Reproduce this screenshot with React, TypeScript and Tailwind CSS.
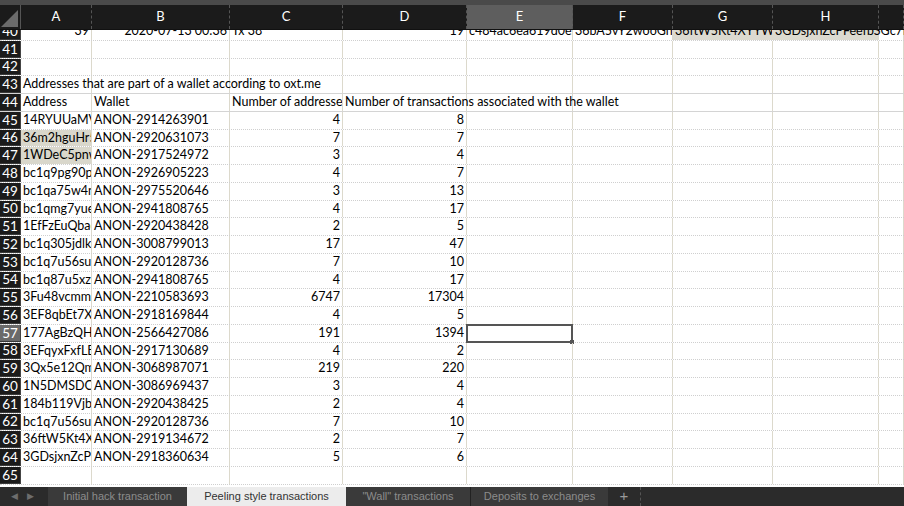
const cols = [
  { key: "A", w: "w-[71px]" },
  { key: "B", w: "w-[138px]" },
  { key: "C", w: "w-[113px]" },
  { key: "D", w: "w-[124px]" },
  { key: "E", w: "w-[106px]" },
  { key: "F", w: "w-[100px]" },
  { key: "G", w: "w-[100px]" },
  { key: "H", w: "w-[106px]" },
  { key: "I", w: "flex-1" },
];

type Row = { n: number; a?: string; b?: string; c?: string; d?: string; beigeA?: boolean };

const rows: Row[] = [
  { n: 45, a: "14RYUUaMVpX4", b: "ANON-2914263901", c: "4", d: "8" },
  { n: 46, a: "36m2hguHr5eK", b: "ANON-2920631073", c: "7", d: "7", beigeA: true },
  { n: 47, a: "1WDeC5pnwQ2", b: "ANON-2917524972", c: "3", d: "4", beigeA: true },
  { n: 48, a: "bc1q9pg90pvx", b: "ANON-2926905223", c: "4", d: "7" },
  { n: 49, a: "bc1qa75w4nxz", b: "ANON-2975520646", c: "3", d: "13" },
  { n: 50, a: "bc1qmg7yuezs", b: "ANON-2941808765", c: "4", d: "17" },
  { n: 51, a: "1EfFzEuQbaeJ", b: "ANON-2920438428", c: "2", d: "5" },
  { n: 52, a: "bc1q305jdlk3x", b: "ANON-3008799013", c: "17", d: "47" },
  { n: 53, a: "bc1q7u56suyk", b: "ANON-2920128736", c: "7", d: "10" },
  { n: 54, a: "bc1q87u5xzuq", b: "ANON-2941808765", c: "4", d: "17" },
  { n: 55, a: "3Fu48vcmmZq", b: "ANON-2210583693", c: "6747", d: "17304" },
  { n: 56, a: "3EF8qbEt7XTk", b: "ANON-2918169844", c: "4", d: "5" },
  { n: 57, a: "177AgBzQH5x", b: "ANON-2566427086", c: "191", d: "1394" },
  { n: 58, a: "3EFqyxFxfLE(", b: "ANON-2917130689", c: "4", d: "2" },
  { n: 59, a: "3Qx5e12QmVb", b: "ANON-3068987071", c: "219", d: "220" },
  { n: 60, a: "1N5DMSDCaT", b: "ANON-3086969437", c: "3", d: "4" },
  { n: 61, a: "184b119Vjbjz", b: "ANON-2920438425", c: "2", d: "4" },
  { n: 62, a: "bc1q7u56suyk", b: "ANON-2920128736", c: "7", d: "10" },
  { n: 63, a: "36ftW5Kt4XYY", b: "ANON-2919134672", c: "2", d: "7" },
  { n: 64, a: "3GDsjxnZcPFe", b: "ANON-2918360634", c: "5", d: "6" },
  { n: 65 },
];

const cellBase =
  "h-full shrink-0 border-r border-r-[#dcd9cc] px-[2px] flex items-center whitespace-nowrap";

function RowHead({ n, active }: { n: number | string; active?: boolean }) {
  return (
    <div
      className={`w-[21px] shrink-0 h-full flex items-center justify-center text-[13.5px] text-white border-b border-b-[#3a3a3a] border-r border-r-[#444] ${
        active ? "bg-[#6a6a6a]" : "bg-[#1b1b1b]"
      }`}
    >
      {n}
    </div>
  );
}

function Cell({
  w,
  children,
  right,
  clip,
  className = "",
}: {
  w: string;
  children?: React.ReactNode;
  right?: boolean;
  clip?: boolean;
  className?: string;
}) {
  return (
    <div
      className={`${cellBase} ${w} ${right ? "justify-end" : ""} ${clip ? "overflow-hidden" : ""} ${className}`}
    >
      {children}
    </div>
  );
}

function DataRow({ r }: { r: Row }) {
  const active = r.n === 57;
  return (
    <div className="flex h-[17.75px] border-b border-dotted border-b-[#cfcfcf]">
      <RowHead n={r.n} active={active} />
      <Cell w="w-[71px]" clip className={r.beigeA ? "bg-[#d9d7cb]" : ""}>
        {r.a}
      </Cell>
      <Cell w="w-[138px]" clip>
        {r.b}
      </Cell>
      <Cell w="w-[113px]" right>
        {r.c}
      </Cell>
      <Cell w="w-[124px]" right>
        {r.d}
      </Cell>
      <Cell w="w-[106px]" className="relative overflow-visible">
        {active && (
          <div className="absolute -left-[1px] -top-[1px] w-[107px] h-[19px] border-2 border-[#555]">
            <div className="absolute -right-[3px] -bottom-[3px] w-[4px] h-[4px] bg-[#555]" />
          </div>
        )}
      </Cell>
      <Cell w="w-[100px]" />
      <Cell w="w-[100px]" />
      <Cell w="w-[106px]" />
      <Cell w="flex-1" />
    </div>
  );
}

export default function App() {
  return (
    <div
      className="w-[904px] h-[506px] overflow-hidden flex flex-col bg-white text-[12.5px] text-black"
      style={{ fontFamily: "Lato, 'Open Sans', sans-serif" }}
    >
      {/* top strip */}
      <div className="h-[5px] shrink-0 bg-[#4a4a4a]" />
      {/* column headers */}
      <div className="flex h-[25px] shrink-0 bg-[#1b1b1b] text-white text-[13px] border-b border-b-[#111]">
        <div className="w-[21px] shrink-0 relative border-r border-r-[#555]">
          <div className="absolute bottom-[2px] right-[2px] w-0 h-0 border-l-[17px] border-l-transparent border-b-[17px] border-b-[#6b6b6b]" />
        </div>
        {cols.map((c) => (
          <div
            key={c.key}
            className={`${c.w} shrink-0 h-full flex items-center justify-center border-r border-dashed border-r-[#555] ${
              c.key === "E" ? "bg-[#5e5e5e]" : ""
            }`}
          >
            {c.key !== "I" ? c.key : ""}
          </div>
        ))}
      </div>

      {/* grid */}
      <div className="flex-1 overflow-hidden flex flex-col">
        {/* row 40, partially scrolled */}
        <div className="flex h-[17.75px] -mt-[7px] border-b border-dotted border-b-[#cfcfcf] shrink-0">
          <RowHead n={40} />
          <Cell w="w-[71px]" right>39</Cell>
          <Cell w="w-[138px]" right>2020-07-13 00:36</Cell>
          <Cell w="w-[113px]">Tx 38</Cell>
          <Cell w="w-[124px]" right>19</Cell>
          <Cell w="w-[106px]" clip>c484ac6ea619d0e.</Cell>
          <Cell w="w-[100px]" clip>36bA5vY2wooGn4</Cell>
          <Cell w="w-[100px]" clip className="bg-[#dcdad0]">36ftW5Kt4XYYWA</Cell>
          <Cell w="w-[106px]" className="bg-[#dcdad0] overflow-visible relative z-10">
            3GDsjxnZcPFeefbSGc7Li
          </Cell>
          <Cell w="flex-1" />
        </div>
        {[41, 42].map((n) => (
          <div key={n} className="flex h-[17.75px] shrink-0 border-b border-dotted border-b-[#cfcfcf]">
            <RowHead n={n} />
            {cols.map((c) => (
              <Cell key={c.key} w={c.w} />
            ))}
          </div>
        ))}
        {/* row 43 */}
        <div className="flex h-[17.75px] shrink-0 border-b border-b-[#d4d4d4]">
          <RowHead n={43} />
          <Cell w="w-[71px]" className="overflow-visible relative z-10">
            Addresses that are part of a wallet according to oxt.me
          </Cell>
          {cols.slice(1).map((c) => (
            <Cell key={c.key} w={c.w} />
          ))}
        </div>
        {/* row 44 */}
        <div className="flex h-[17.75px] shrink-0 border-b border-b-[#d4d4d4]">
          <RowHead n={44} />
          <Cell w="w-[71px]">Address</Cell>
          <Cell w="w-[138px]">Wallet</Cell>
          <Cell w="w-[113px]" clip>Number of addresses</Cell>
          <Cell w="w-[124px]" className="overflow-visible relative z-10">
            Number of transactions associated with the wallet
          </Cell>
          {cols.slice(4).map((c) => (
            <Cell key={c.key} w={c.w} />
          ))}
        </div>
        {rows.map((r) => (
          <div key={r.n} className="shrink-0">
            <DataRow r={r} />
          </div>
        ))}
      </div>

      {/* sheet tabs */}
      <div
        className="h-[19px] shrink-0 flex items-stretch bg-[#2b2b2b] text-[11px] mt-[2px]"
        style={{ fontFamily: "'Liberation Sans', Arial, sans-serif" }}
      >
        <div className="w-[48px] flex items-center gap-[9px] pl-[11px] text-[#6d6d6d] text-[9px]">
          <span>◀</span>
          <span>▶</span>
        </div>
        <div className="w-[139px] flex items-center justify-center bg-[#3a3a3a] text-[#8c8c8c]">
          Initial hack transaction
        </div>
        <div className="w-[159px] flex items-center justify-center bg-[#ececec] text-[#333]">
          Peeling style transactions
        </div>
        <div className="w-[125px] flex items-center justify-center bg-[#3a3a3a] text-[#8c8c8c] border-r border-r-[#222]">
          "Wall" transactions
        </div>
        <div className="w-[137px] flex items-center justify-center bg-[#3a3a3a] text-[#8c8c8c]">
          Deposits to exchanges
        </div>
        <div className="w-[33px] flex items-center justify-center text-[#9a9a9a] text-[15px] border-r border-dashed border-r-[#555]">
          +
        </div>
        <div className="flex-1" />
      </div>
    </div>
  );
}
